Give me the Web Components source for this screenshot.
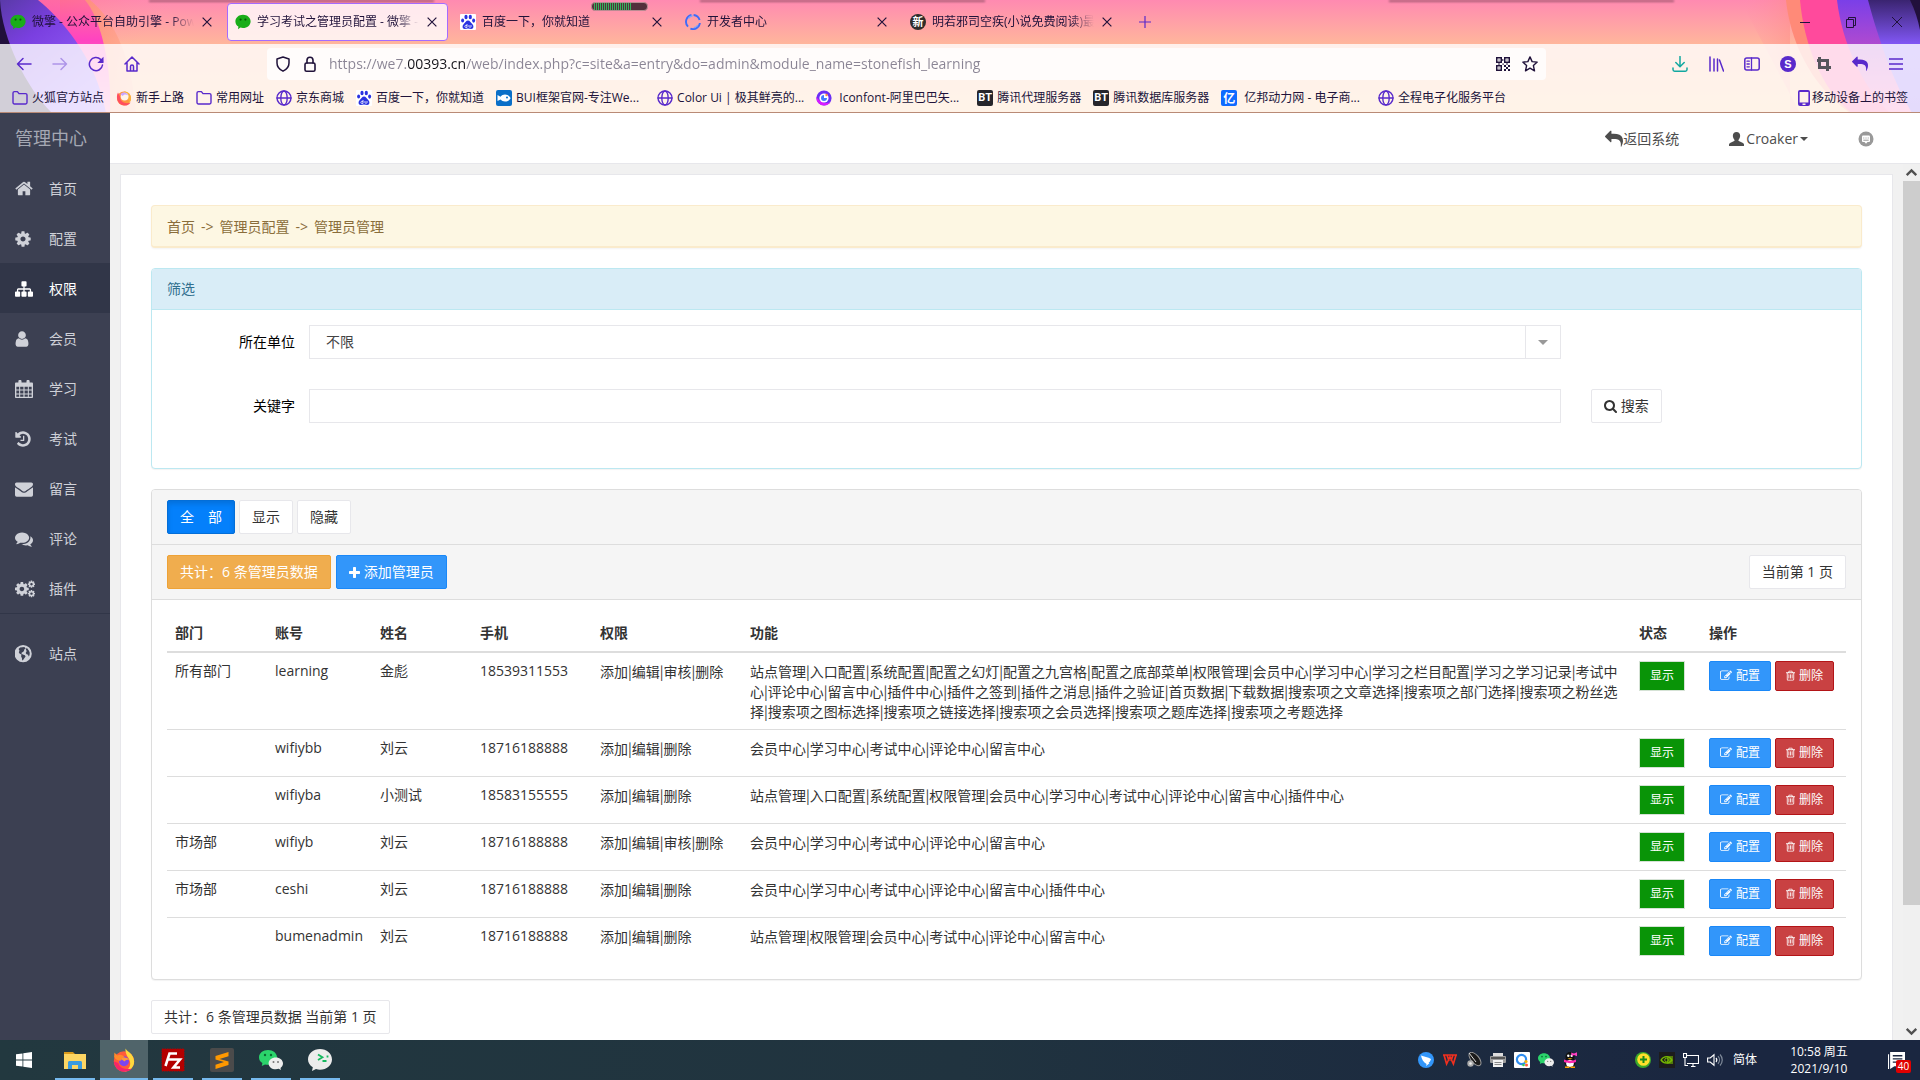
<!DOCTYPE html>
<html lang="zh-CN">
<head>
<meta charset="utf-8">
<title>学习考试之管理员配置 - 微擎</title>
<style>
html, body { margin: 0; height: 100%; }
body {
  font: 14px/20px "Open Sans", "Noto Sans CJK SC", sans-serif;
  color: #333; background: #f1f1f1; overflow: hidden;
}
</style>
</head>
<body>
<desk-top>
  <browser-chrome slot="chrome">
    <browser-tab slot="tab" icon="wechat">微擎 - 公众平台自助引擎 - Powered by</browser-tab>
    <browser-tab slot="tab" icon="wechat" active>学习考试之管理员配置 - 微擎 - 公众平台</browser-tab>
    <browser-tab slot="tab" icon="baidu">百度一下，你就知道</browser-tab>
    <browser-tab slot="tab" icon="ring">开发者中心</browser-tab>
    <browser-tab slot="tab" icon="novel">明若邪司空疾(小说免费阅读)最新章节</browser-tab>
    <book-mark slot="mark" icon="folder">火狐官方站点</book-mark>
    <book-mark slot="mark" icon="firefox">新手上路</book-mark>
    <book-mark slot="mark" icon="folder">常用网址</book-mark>
    <book-mark slot="mark" icon="globeline">京东商城</book-mark>
    <book-mark slot="mark" icon="baidu">百度一下，你就知道</book-mark>
    <book-mark slot="mark" icon="bui" wide>BUI框架官网-专注We...</book-mark>
    <book-mark slot="mark" icon="globeline">Color Ui | 极其鲜亮的...</book-mark>
    <book-mark slot="mark" icon="iconfont" wide>&nbsp;Iconfont-阿里巴巴矢...</book-mark>
    <book-mark slot="mark" icon="bt">腾讯代理服务器</book-mark>
    <book-mark slot="mark" icon="bt">腾讯数据库服务器</book-mark>
    <book-mark slot="mark" icon="yi" wide>&nbsp;亿邦动力网 - 电子商...</book-mark>
    <book-mark slot="mark" icon="globeline">全程电子化服务平台</book-mark>
    <book-mark slot="mobile" icon="phone">移动设备上的书签</book-mark>
  </browser-chrome>

  <side-nav slot="nav" heading="管理中心">
    <nav-item icon="home">首页</nav-item>
    <nav-item icon="cog">配置</nav-item>
    <nav-item icon="sitemap" active>权限</nav-item>
    <nav-item icon="user">会员</nav-item>
    <nav-item icon="calendar">学习</nav-item>
    <nav-item icon="history">考试</nav-item>
    <nav-item icon="envelope">留言</nav-item>
    <nav-item icon="comments">评论</nav-item>
    <nav-item icon="cogs">插件</nav-item>
    <nav-item slot="extra" icon="globe">站点</nav-item>
  </side-nav>

  <top-bar slot="top"></top-bar>

  <crumb-alert>首页<crumb-sep></crumb-sep>管理员配置<crumb-sep></crumb-sep>管理员管理</crumb-alert>
  <filter-panel></filter-panel>
  <data-panel>
    <ui-button slot="filters" kind="active">全　部</ui-button>
    <ui-button slot="filters">显示</ui-button>
    <ui-button slot="filters">隐藏</ui-button>
    <ui-button slot="actions" kind="warning">共计：6 条管理员数据</ui-button>
    <ui-button slot="actions" kind="primary" icon="plus">添加管理员</ui-button>
    <ui-button slot="page">当前第 1 页</ui-button>
    <admin-table></admin-table>
  </data-panel>
  <div><ui-button>共计：6 条管理员数据 当前第 1 页</ui-button></div>

  <task-bar slot="taskbar"></task-bar>
</desk-top>

<script>
const REPLY = '<path transform="translate(1792 0) scale(-1 1)" d="M1792 640q0 26-19 45l-512 512q-19 19-45 19t-45-19-19-45v-256h-224q-98 0-175.500 6t-154 21.500-133 42.500-105.500 69.500-80 101-48.500 138.500-17.500 181q0 55 5 123 0 6 2.500 23.500t2.500 26.500q0 15-8.500 25t-23.500 10q-16 0-28-17-7-9-13-22t-13.500-30-10.500-24q-127-285-127-451 0-199 53-333 162-403 875-403h224v-256q0-26 19-45t45-19 45 19l512 512q19 19 19 45z"/>';
const COG = 'M1152 896q0-106-75-181t-181-75-181 75-75 181 75 181 181 75 181-75 75-181zm512-109v222q0 12-8 23t-20 13l-185 28q-19 54-39 91 35 50 107 138 10 12 10 25t-9 23q-27 37-99 108t-94 71q-12 0-26-9l-138-108q-44 23-91 38-16 136-29 186-7 28-36 28h-222q-14 0-24.500-8.500t-11.500-21.500l-28-184q-49-16-90-37l-141 107q-10 9-25 9-14 0-25-11-126-114-165-168-7-10-7-23 0-12 8-23 15-21 51-66.500t54-70.500q-27-50-41-99l-183-27q-13-2-21-12.500t-8-23.500v-222q0-12 8-23t19-13l186-28q14-46 39-92-40-57-107-138-10-12-10-24 0-10 9-23 26-36 98.500-107.500t94.500-71.500q13 0 26 10l138 107q44-23 91-38 16-136 29-186 7-28 36-28h222q14 0 24.500 8.500t11.500 21.500l28 184q49 16 90 37l142-107q9-9 24-9 13 0 25 10 129 119 165 170 7 8 7 22 0 12-8 23-15 21-51 66.500t-54 70.500q26 50 41 98l183 28q13 2 21 12.500t8 23.500z';
const FOX = '<circle cx="8" cy="9" r="6.800" fill="#ff5a3a"/><path d="M9 .3c1 1.700 2.600 2.200 4 4 1.600 2 2 4.200 1.600 6.400-.8 3-3.600 5.100-6.600 5.100 3-1 4.600-3.600 4-6.600C11.600 6.600 8.600 4.600 9 .3z" fill="#ffd83d"/><path d="M1.300 9c.4 4 3.200 6.800 6.700 6.800 2.200 0 4-.8 5.200-2.200-3 1-8 .4-9-3.600z" fill="#f5246b"/><circle cx="8" cy="8.800" r="3.300" fill="#7b45f0"/><path d="M1.600 3l2 2c1.600-1 3.600-.4 5 1.200C7.600 6.400 6.400 7 6 8.400 4.400 8.600 2.400 8 1.400 6z" fill="#ff8a2a"/><path d="M6 7.400C7 6 10 5.800 11.600 8 10 7.500 9 8 8.400 9z" fill="#ff9a3a"/>';
const M = 'viewBox="0 0 1792 1792"', S = 'viewBox="0 0 16 16"';
const line = (w = 1.4) => `fill="none" stroke="currentColor" stroke-width="${w}" stroke-linecap="round" stroke-linejoin="round"`;
const ICONS = {
  home: ['viewBox="50 100 1692 1692"', '<path d="M1472 992v480q0 26-19 45t-45 19h-384v-384h-256v384h-384q-26 0-45-19t-19-45v-480q0-1 .5-3t.5-3l575-474 575 474q1 2 1 6zm223-69l-62 74q-8 9-21 11h-3q-13 0-21-7l-692-577-692 577q-12 8-24 7-13-2-21-11l-62-74q-8-10-7-23.500t11-21.500l719-599q32-26 76-26t76 26l244 204v-195q0-14 9-23t23-9h192q14 0 23 9t9 23v408l219 182q10 8 11 21.500t-7 23.500z"/>'],
  cog: [M, `<path d="${COG}"/>`],
  cogs: ['viewBox="0 0 1920 1792"', `<path transform="translate(-110 120) scale(.86)" d="${COG}"/><path transform="translate(1170 20) scale(.46)" d="${COG}"/><path transform="translate(1170 930) scale(.46)" d="${COG}"/>`],
  sitemap: [M, '<path d="M1792 1248v320q0 40-28 68t-68 28h-320q-40 0-68-28t-28-68v-320q0-40 28-68t68-28h96v-192h-512v192h96q40 0 68 28t28 68v320q0 40-28 68t-68 28h-320q-40 0-68-28t-28-68v-320q0-40 28-68t68-28h96v-192h-512v192h96q40 0 68 28t28 68v320q0 40-28 68t-68 28h-320q-40 0-68-28t-28-68v-320q0-40 28-68t68-28h96v-192q0-52 38-90t90-38h512v-192h-96q-40 0-68-28t-28-68v-320q0-40 28-68t68-28h320q40 0 68 28t28 68v320q0 40-28 68t-68 28h-96v192h512q52 0 90 38t38 90v192h96q40 0 68 28t28 68z"/>'],
  user: [M, '<path d="M1536 1399q0 109-62.500 187t-150.500 78h-854q-88 0-150.500-78t-62.500-187q0-85 8.500-160.500t31.500-152 58.500-131 94-89 134.500-34.500q131 128 313 128t313-128q76 0 134.500 34.500t94 89 58.500 131 31.500 152 8.500 160.500zm-256-887q0 159-112.500 271.500t-271.500 112.500-271.500-112.500-112.500-271.500 112.500-271.500 271.500-112.500 271.500 112.500 112.500 271.500z"/>'],
  calendar: [S, '<path fill-rule="evenodd" d="M1 2.200h2V1c0-.6.4-1 1-1h.8c.6 0 1 .4 1 1v1.200h4.400V1c0-.6.4-1 1-1h.8c.6 0 1 .4 1 1v1.200h2c.6 0 1 .4 1 1V15c0 .6-.4 1-1 1H1c-.6 0-1-.4-1-1V3.200c0-.6.4-1 1-1zM1.200 6v2.500h2.500V6zm3.400 0v2.500h2.900V6zm3.900 0v2.500h2.900V6zm3.800 0v2.500h2.500V6zM1.200 9.300V12h2.500V9.300zm3.400 0V12h2.900V9.300zm3.900 0V12h2.900V9.300zm3.800 0V12h2.500V9.300zM1.200 12.800v2.100h2.500v-2.100zm3.400 0v2.100h2.900v-2.100zm3.900 0v2.100h2.900v-2.100zm3.800 0v2.100h2.500v-2.100z"/>'],
  history: [M, '<path d="M1664 896q0 156-61 298t-164 245-245 164-298 61q-172 0-327-72.500t-264-204.500q-7-10-6.500-22.500t8.500-20.500l137-138q10-9 25-9 16 2 23 12 73 95 179 147t225 52q104 0 198.500-40.500t163.500-109.500 109.500-163.500 40.500-198.500-40.500-198.500-109.500-163.500-163.500-109.500-198.500-40.500q-98 0-188 35.500t-160 101.500l137 138q31 30 14 69-17 40-59 40h-448q-26 0-45-19t-19-45v-448q0-42 40-59 39-17 69 14l130 129q107-101 244.500-156.500t284.500-55.500q156 0 298 61t245 164 164 245 61 298zm-640-288v448q0 14-9 23t-23 9h-320q-14 0-23-9t-9-23v-64q0-14 9-23t23-9h224v-352q0-14 9-23t23-9h64q14 0 23 9t9 23z"/>'],
  envelope: [M, '<path d="M1792 710v794q0 66-47 113t-113 47h-1472q-66 0-113-47t-47-113v-794q44 49 101 87 362 246 497 345 57 42 92.500 65.500t94.500 48 110 24.500h2q51 0 110-24.500t94.500-48 92.500-65.500q170-123 498-345 57-39 100-87zm0-294q0 79-49 151t-122 123q-376 261-468 325-10 7-42.500 30.500t-54 38-52 32.500-57.500 27-50 9h-2q-23 0-50-9t-57.500-27-52-32.500-54-38-42.500-30.500q-91-64-262-182.500t-205-142.500q-62-42-117-115.500t-55-136.500q0-78 41.500-130t118.500-52h1472q65 0 112.500 47t47.500 113z"/>'],
  comments: [M, '<path d="M1408 768q0 139-94 257t-256.500 186.500-353.500 68.500q-86 0-176-16-124 88-278 128-36 9-86 16h-3q-11 0-20.500-8t-11.500-21q-1-3-1-6.500t.5-6.500 2-6l2.500-5 3.500-5.500 4-5 4.500-5 4-4.500q5-6 23-25t26-29.500 22.500-29 25-38.500 20.500-44q-124-72-195-177t-71-224q0-139 94-257t256.500-186.500 353.500-68.500 353.500 68.500 256.500 186.500 94 257zm384 256q0 120-71 224.500t-195 176.500q10 24 20.500 44t25 38.500 22.500 29 26 29.500 23 25q1 1 4 4.500t4.500 5 4 5 3.500 5.500l2.500 5 2 6 .5 6.500-1 6.500q-3 14-13 22t-22 7q-50-7-86-16-154-40-278-128-90 16-176 16-271 0-472-132 58 4 88 4 161 0 309-45t264-129q125-92 192-212t67-254q0-77-23-152 129 71 204 178t75 230z"/>'],
  globe: [S, '<path fill-rule="evenodd" d="M7.200 0a7.600 7.600 0 1 1 0 15.400A7.600 7.600 0 0 1 7.200 0zM4.500 2.200L3.200 3.600 4 5l-.6 1.500.8 1.200 1.600.8-.4 1.600.8 1.700.2 1.900.8-.3 1.200-1.800 1-1.400-.6-1.200-1.800-.6-1.200-.6.2-1.200 1.200-.4.800-1 .2-1.300L9.500 3 8.300 1.800 6.500 2zM10.500 2.500L9.600 4l.8 1.400L9.500 7l.8 1.300 1.400.4.4 1.600.8-1.200.2-2.300L12.400 5z"/>'],
  search: ['viewBox="64 128 1664 1664"', '<path d="M1216 832q0-185-131.500-316.500t-316.500-131.500-316.500 131.500-131.500 316.500 131.500 316.500 316.500 131.500 316.500-131.500 131.500-316.500zm512 832q0 52-38 90t-90 38q-54 0-90-38l-343-342q-179 124-399 124-143 0-273.500-55.500t-225-150-150-225-55.500-273.500 55.500-273.500 150-225 225-150 273.500-55.500 273.500 55.500 225 150 150 225 55.500 273.500q0 220-124 399l343 343q37 37 37 90z"/>'],
  plus: ['viewBox="192 128 1408 1408"', '<path d="M1600 736v192q0 40-28 68t-68 28h-416v416q0 40-28 68t-68 28h-192q-40 0-68-28t-28-68v-416h-416q-40 0-68-28t-28-68v-192q0-40 28-68t68-28h416v-416q0-40 28-68t68-28h192q40 0 68 28t28 68v416h416q40 0 68 28t28 68z"/>'],
  edit: ['viewBox="0 64 1792 1792"', '<path d="M888 1184l116-116-152-152-116 116v56h96v96h56zm440-720q-16-16-33 1l-350 350q-17 17-1 33t33-1l350-350q17-17 1-33zm80 594v190q0 119-84.500 203.500t-203.500 84.500h-832q-119 0-203.500-84.500t-84.500-203.500v-832q0-119 84.500-203.500t203.500-84.500h832q63 0 117 25 15 7 18 23 3 17-9 29l-49 49q-14 14-32 8-23-6-45-6h-832q-66 0-113 47t-47 113v832q0 66 47 113t113 47h832q66 0 113-47t47-113v-126q0-13 9-22l64-64q15-15 35-7t20 29zm-96-738l288 288-672 672h-288v-288zm444 132l-92 92-288-288 92-92q28-28 68-28t68 28l152 152q28 28 28 68t-28 68z"/>'],
  trash: ['viewBox="192 64 1408 1792"', '<path d="M704 736v576q0 14-9 23t-23 9h-64q-14 0-23-9t-9-23v-576q0-14 9-23t23-9h64q14 0 23 9t9 23zm256 0v576q0 14-9 23t-23 9h-64q-14 0-23-9t-9-23v-576q0-14 9-23t23-9h64q14 0 23 9t9 23zm256 0v576q0 14-9 23t-23 9h-64q-14 0-23-9t-9-23v-576q0-14 9-23t23-9h64q14 0 23 9t9 23zm128 724v-948h-896v948q0 22 7 40.500t14.500 27 10.500 8.500h832q3 0 10.500-8.500t14.500-27 7-40.500zm-672-1076h448l-48-117q-7-9-17-11h-317q-10 2-17 11zm928 32v64q0 14-9 23t-23 9h-96v948q0 83-47 143.500t-113 60.500h-832q-66 0-113-58.500t-47-141.500v-952h-96q-14 0-23-9t-9-23v-64q0-14 9-23t23-9h309l70-167q15-37 54-63t79-26h320q40 0 79 26t54 63l70 167h309q14 0 23 9t9 23z"/>'],
  reply: [M, REPLY],
  person: [S, '<path d="M8 0c2.400 0 3.900 1.600 3.900 4.100 0 1.500-.6 3.100-1.600 4.100-.3.400-.3 1.300.2 1.500l4.400 1.900c.7.300 1.100 1 1.100 1.700V15H0v-1.700c0-.7.400-1.400 1.100-1.700l4.400-1.900c.5-.2.500-1.100.2-1.500-1-1-1.600-2.600-1.600-4.100C4.100 1.600 5.600 0 8 0z"/>'],
  chatdot: [S, '<circle cx="8" cy="8" r="7.500"/><rect x="4" y="4.500" width="8" height="6.500" rx="1" fill="#fff"/><path d="M6.500 11h3L8 12.800z" fill="#fff"/><path d="M5.300 7h1M7.500 7h1M9.700 7h1M5.300 9.200h5.400" stroke="#999" stroke-width="1"/>'],
  wechat: [S, '<path fill="#1aad19" d="M8 .8c4.200 0 7.600 2.900 7.600 6.600S12.200 14 8 14c-.9 0-1.800-.1-2.600-.4L3 15.200l.4-2.600C1.600 11.400.4 9.500.4 7.400.4 3.700 3.800.8 8 .8z"/><circle cx="5.600" cy="5.600" r="1.100" fill="#0a5a09"/><circle cx="10.400" cy="5.600" r="1.100" fill="#0a5a09"/>'],
  baidu: [S, '<rect width="16" height="16" rx="1" fill="#fff"/><g fill="#2932e1"><ellipse cx="6" cy="3" rx="1.600" ry="2.300"/><ellipse cx="10.300" cy="3" rx="1.600" ry="2.300"/><ellipse cx="2.600" cy="6.500" rx="1.500" ry="2.100"/><ellipse cx="13.600" cy="6.600" rx="1.500" ry="2.100"/><path d="M8 6.500c2 0 2.600 2 4.200 3.500 2 1.900 1.400 5-1 5-1.200 0-2-.4-3.200-.4s-2 .4-3.200.4c-2.400 0-3-3.100-1-5C5.400 8.500 6 6.500 8 6.500z"/></g><path d="M7 10v3.400H5.600c-1 0-1-2 0-2H7M9 11v1.800c0 .6 2 .6 2 0V11" fill="none" stroke="#fff" stroke-width=".8"/>'],
  ring: [S, '<g fill="none" stroke="#3d6bfa" stroke-width="1.900"><path d="M6.500.9A7 7 0 0 0 3 12.600"/><path d="M5.400 14.600A7 7 0 0 0 14.900 9"/><path d="M14.600 6A7 7 0 0 0 8.600 1"/></g><path d="M3.500 4.500a6 6 0 0 1 4-2.800M12.800 11a6 6 0 0 1-4 2.800" stroke="#7aa4ff" stroke-width="1.400" fill="none"/>'],
  folder: [S, `<path ${line()} d="M1 3c0-.8.600-1.400 1.400-1.400h3L7 3.600h6.600c.8 0 1.400.6 1.400 1.400v7.600c0 .8-.6 1.400-1.400 1.400H2.400C1.600 14 1 13.400 1 12.600z"/>`],
  globeline: [S, `<g ${line()}><circle cx="8" cy="8" r="7"/><ellipse cx="8" cy="8" rx="3.200" ry="7"/><path d="M1 8h14"/></g>`],
  firefox: [S, '<circle cx="8" cy="8.500" r="7" fill="#ff9640"/><path d="M2 2.500C0 6 .6 12 5 14.600c4 2 8 .6 9.600-2.200C10 14.600 4 12 4.200 7z" fill="#ff4f5e"/><path d="M8 1.600c4 0 7 2.600 7 6.600 0 2-.8 3.600-2 4.800 0-4-2-6-5-6.400z" fill="#f7b23c"/><circle cx="8.600" cy="6.600" r="3.900" fill="#fff3e8"/><path d="M4.400 4.400C6.500 1.500 11 2 12.400 5.500 10 4 8 4 6.800 6z" fill="#c9a6ff"/>'],
  bui: [S, '<rect width="16" height="16" rx="2" fill="#0a6fc8"/><path d="M1.500 5l3 1.800C6.200 4.400 9 3.800 11.600 5c1.600.8 2.600 2 3 3.200-1 2-3 3.400-5.600 3.400-1.800 0-3.400-.8-4.500-2L1.500 11z" fill="#fff"/><circle cx="11" cy="7.400" r="1" fill="#0a6fc8"/>'],
  iconfont: [S, '<circle cx="8" cy="8" r="7.600" fill="#6a2ff5"/><path d="M8 15.600A7.600 7.600 0 0 1 .6 6.500C2 11 10 15 14.600 11.800A7.600 7.600 0 0 1 8 15.600z" fill="#d81bff"/><circle cx="8" cy="8" r="4.600" fill="#fff"/><path d="M8 5a3 3 0 1 0 3 3H8z" fill="#3f7bff"/><circle cx="10.500" cy="5" r="1.200" fill="#ff8a3c"/>'],
  phone: ['viewBox="2 0 12 16"', '<path fill-rule="evenodd" d="M4 0h8a2 2 0 0 1 2 2v12a2 2 0 0 1-2 2H4a2 2 0 0 1-2-2V2a2 2 0 0 1 2-2zm-.4 2v10.600h8.800V2zM6.500 13.600V15h3v-1.400z"/>'],
  back: [S, `<path ${line(1.500)} d="M15 8H1.500M7 2.500L1.500 8 7 13.500"/>`],
  forward: [S, `<path ${line(1.500)} d="M1 8h13.500M9 2.500L14.500 8 9 13.500"/>`],
  reload: [S, `<path ${line(1.500)} d="M14.500 9A6.600 6.600 0 1 1 12.600 3.400L14.500 5.200"/><path d="M15.500.800v6.200H9.300z"/>`],
  house: [S, `<path ${line(1.500)} d="M1 8L8 1l7 7M3 6.500V15h10V6.500M6.500 15v-4.500c0-2 3-2 3 0V15"/>`],
  shield: [S, `<path ${line(1.500)} d="M8 1l6 2v4c0 4-2.500 6.500-6 8.200C4.500 13.500 2 11 2 7V3z"/>`],
  lock: [S, `<rect ${line(1.600)} x="3" y="7" width="10" height="8.200" rx="1.500"/><path ${line(1.600)} d="M5 7V4.200C5 .2 11 .2 11 4.200V7"/>`],
  qr: [S, '<path fill-rule="evenodd" d="M1 1h6v6H1zm1.500 1.500v3h3v-3zM9 1h6v6H9zm1.500 1.500v3h3v-3zM1 9h6v6H1zm1.500 1.500v3h3v-3zM9 9h2v2H9zm4 0h2v2h-2zm-2 2h2v2h-2zm-2 2h2v2H9zm4 0h2v2h-2z"/><path d="M3.500 3.500h1v1h-1zM11.500 3.500h1v1h-1zM3.500 11.500h1v1h-1zM7.300 3h1v2h-1zM3 7.400h2v1H3zM7.400 7.400h1.400v1.400H7.400zM11 7.400h2v1h-2z"/>'],
  star: [S, `<path ${line()} d="M8 .9l2.100 4.700 5.100.5-3.800 3.500 1.100 5.200L8 12.200l-4.500 2.600 1.100-5.200L.8 6.100l5.100-.5z"/>`],
  download: [S, `<path ${line(1.500)} d="M8 .5v10M3.800 6.500L8 10.700l4.200-4.200M1 12v1.500c0 1 .6 1.700 1.600 1.700h10.800c1 0 1.600-.7 1.600-1.700V12"/>`],
  library: [S, `<path ${line(1.500)} d="M2 1v14M6 3v12M9.500 3v12M11.500 4l4 11"/>`],
  sidebar: [S, `<rect ${line(1.500)} x=".8" y="2" width="14.400" height="12" rx="2"/><path ${line(1.300)} d="M7.500 2v12M3 5.200h2.300M3 8h2.300M3 10.800h2.300"/>`],
  crop: [S, '<path d="M3.500 1v10.500H15M1 4.500h10.500V15" fill="none" stroke="#55565c" stroke-width="3"/>'],
  menu: [S, '<path d="M1 3h14M1 8h14M1 13h14" stroke="currentColor" stroke-width="1.300"/>'],
  plusthin: [S, '<path d="M8 2v12M2 8h12" stroke="currentColor" stroke-width="1.200"/>'],
  close: [S, '<path d="M3 3l10 10M13 3L3 13" stroke="currentColor" stroke-width="1.400"/>'],
  min: [S, '<path d="M3 8.500h10" stroke="currentColor" stroke-width="1"/>'],
  restore: [S, '<path d="M3.500 5.500h7v8h-7zM5.500 5.500v-2h7v8h-2" fill="none" stroke="currentColor"/>'],
  winclose: [S, '<path d="M3 3l10 10M13 3L3 13" stroke="currentColor" stroke-width="1"/>'],
  up: [S, '<path d="M3.500 10.500L8 6l4.500 4.500" fill="none" stroke="#505050" stroke-width="2.200"/>'],
  down: [S, '<path d="M3.500 5.500L8 10l4.500-4.500" fill="none" stroke="#505050" stroke-width="2.200"/>'],
  windows: [S, '<path fill="#fff" d="M0 2.300l6.500-.9v6.200H0zM7.300 1.300L16 0v7.600H7.300zM0 8.400h6.500v6.200L0 13.700zM7.300 8.400H16V16l-8.700-1.300z"/>'],
  explorer: ['viewBox="0 0 24 24"', '<path d="M1 4h9l2 2h11v3H1z" fill="#d99a1c"/><rect x="1" y="6" width="22" height="15" fill="#fdd663"/><path d="M5 21v-6.500c0-.8.700-1.500 1.500-1.500h11c.8 0 1.500.7 1.500 1.500V21h-4v-4H9v4z" fill="#3a9be0"/>'],
  foxbig: [S, FOX],
  filezilla: ['viewBox="0 0 24 24"', '<rect x="1" y="1" width="22" height="22" fill="#b30000" stroke="#b30000" stroke-width="1" stroke-dasharray="1.500 1"/><path d="M4.500 18L8.500 5.500H16M6.500 11.500h5.500M12 11.500h7l-6.500 8H19" fill="none" stroke="#fff" stroke-width="2.600"/>'],
  sublime: ['viewBox="0 0 24 24"', '<rect width="24" height="24" rx="2" fill="#4b4b4b"/><path d="M18.500 4v4.200L9.500 11l9 2.600V17l-13 4v-4.200L14 14l-8.500-2.600V8z" fill="#ff9800"/>'],
  wechat2: ['viewBox="0 0 24 24"', '<path d="M9 2c5 0 9 3.200 9 7.400s-4 7.400-9 7.400c-1 0-2-.1-3-.4L2.800 18l.6-3C1.300 13.700 0 11.700 0 9.400 0 5.200 4 2 9 2z" fill="#2bd46b"/><circle cx="6" cy="7" r="1.200" fill="#0b6b33"/><circle cx="12" cy="7" r="1.200" fill="#0b6b33"/><path d="M16.800 9.500c4 0 7.200 2.600 7.200 6 0 1.800-1 3.400-2.500 4.500l.4 2-2.200-1.200c-.9.300-1.900.5-2.900.5-4 0-7.200-2.600-7.200-5.900s3.200-5.900 7.200-5.900z" fill="#eee"/><circle cx="14.500" cy="14" r="1" fill="#777"/><circle cx="19" cy="14" r="1" fill="#777"/>'],
  devtool: ['viewBox="0 0 24 24"', '<path d="M12 1c6.600 0 12 4.600 12 10.400s-5.400 10.300-12 10.300c-1.400 0-2.700-.2-4-.6L4 23l.8-3.800C1.800 17.300 0 14.500 0 11.400 0 5.600 5.400 1 12 1z" fill="#ececec"/><path d="M10 6.500l4.500 2.800-4.500 2.800M14.500 13h4M19.500 7.500v2" fill="none" stroke="#17b85f" stroke-width="1.800"/>'],
  bird: [S, '<circle cx="8" cy="8" r="8" fill="#3296fa"/><path d="M3 3.500c3 1.200 7 1.600 10 3.500-.5 2-1.500 3-2.500 4l1 .2L8 14l.6-2C5.500 10.500 3.500 7 3 3.500z" fill="#fff"/>'],
  wps: [S, '<path d="M1 3h14M2 3l2.600 9L8 5l3.400 7L14 3M5 3l2 6M11 3L9 9" fill="none" stroke="#f0301f" stroke-width="1.700"/>'],
  dish: [S, '<ellipse cx="9" cy="7" rx="8" ry="4" transform="rotate(50 9 7)" fill="#1b1b1b" stroke="#999"/><circle cx="4.500" cy="11.500" r="3.200" fill="#aaa"/><circle cx="4.500" cy="11.500" r="1.300" fill="#eee"/><path d="M3 1l7 9" stroke="#ddd"/>'],
  printer: [S, '<rect x="3" y="1" width="10" height="5" fill="#ddd"/><rect x="0" y="4" width="16" height="7" rx="1" fill="#9c9c9c"/><rect x="1" y="5" width="14" height="2" fill="#555"/><rect x="3" y="8" width="10" height="7" fill="#f2f2f2"/><path d="M4.500 10.500h7M4.500 12.500h7" stroke="#888"/>'],
  qtool: [S, '<rect width="16" height="16" rx="1" fill="#fff"/><circle cx="7.500" cy="7.500" r="4.600" fill="none" stroke="#2f8df0" stroke-width="2.200"/><circle cx="12" cy="9.500" r="1.600" fill="#ffb400"/><circle cx="12.500" cy="13" r="1.500" fill="#ff5a3c"/><circle cx="9.500" cy="13" r="1.300" fill="#34c759"/>'],
  penguin: [S, '<ellipse cx="8" cy="4.800" rx="4.600" ry="4.800" fill="#111"/><ellipse cx="8" cy="10.500" rx="5.500" ry="5" fill="#111"/><ellipse cx="8" cy="11.500" rx="3.800" ry="3.600" fill="#fff"/><circle cx="6.300" cy="3.800" r="1.200" fill="#fff"/><circle cx="9.700" cy="3.800" r="1.200" fill="#fff"/><path d="M5.500 6.200h5L8 7.600z" fill="#ffb400"/><path d="M2 7.600c3.500 1.600 8.500 1.600 12 0v2.400c-3.500 1.600-8.500 1.600-12 0z" fill="#ff2ab0"/><path d="M9 .5l3 1L15 .3v4l-3-1.300-2 1.300z" fill="#ff3dc0"/><path d="M3 15.200h4.500M8.500 15.200H13" stroke="#ffa200" stroke-width="1.500"/>'],
  safe: [S, '<circle cx="8" cy="8" r="8" fill="#3ca82a"/><circle cx="8.500" cy="7.500" r="6.300" fill="#ffdf2b"/><path d="M8.500 4v7M5 7.500h7" stroke="#178a1a" stroke-width="2"/>'],
  nvidia: [S, '<rect width="16" height="16" fill="#1c1c1c"/><path d="M2 8c3-4.500 8-4.500 11 0-3 4-8 4-11 0z" fill="none" stroke="#76b900" stroke-width="1.300"/><circle cx="7.500" cy="8" r="1.800" fill="none" stroke="#76b900"/><path d="M8 4h6v8H8z" fill="#76b900" opacity=".6"/>'],
  network: [S, '<path d="M4 3.500h11.500v8H4M8 14.500h4.500M10 11.500v3M.5 1.500h3v4h-3zM2 5.500v8h3" fill="none" stroke="#fff" stroke-width="1.100"/>'],
  volume: [S, '<path d="M.6 6v4h2.600L7 13.200V2.800L3.200 6z" fill="none" stroke="#fff" stroke-width="1.100"/><path d="M9 6c1 1.200 1 2.800 0 4" fill="none" stroke="#fff" stroke-width="1.200"/><path d="M11 4.200c2 2.200 2 5.400 0 7.600M13 2.500c3 3.200 3 7.800 0 11" fill="none" stroke="#7f8a99" stroke-width="1.200"/>'],
  notes: [S, '<path d="M2 0h14v13.500H6L2 16z" fill="#fff"/><path d="M.5 2v14" stroke="#fff" stroke-width="1"/><path d="M4.500 3.500h9M4.500 6.500h9M4.500 9.500h6" stroke="#1a2640" stroke-width="1.300"/>']
};
const TILES = { bt: 'BT', yi: '亿', novel: '新', sbadge: 'S' };

const define = (name, html, setup) => {
  const tpl = document.createElement('template');
  tpl.innerHTML = html;
  customElements.define(name, class extends HTMLElement {
    connectedCallback() {
      if (this.shadowRoot) return;
      const root = this.attachShadow({ mode: 'open' });
      root.append(tpl.content.cloneNode(true));
      if (setup) setup(root, this);
    }
  });
};

define('ui-icon', `<style>
:host { display: inline-flex; flex: none; width: var(--size, 16px); height: var(--size, 16px); }
:host([name=trash]) { width: 9px; }
:host([name=plus]) { width: 11px; height: 11px; }
svg { width: 100%; height: 100%; fill: currentColor; display: block; }
.tile { display: block; width: 16px; height: 16px; border-radius: 2px; color: #fff; text-align: center; }
.bt { background: #26262b; font: bold 11px/16px "Roboto", sans-serif; }
.yi { background: #0f6bff; font: bold 12px/16px "Noto Sans CJK SC", sans-serif; }
.novel { border-radius: 50%; background: #2f2c2a; font: bold 11px/15px "Noto Sans CJK SC", sans-serif; }
.sbadge { border-radius: 50%; background: #592acb; font: bold 11px/16px "Liberation Sans", sans-serif; }
</style>`, (root, el) => {
  const n = el.getAttribute('name');
  root.append(document.createRange().createContextualFragment(
    TILES[n] ? `<span class="tile ${n}">${TILES[n]}</span>` : `<svg ${ICONS[n][0]} aria-hidden="true">${ICONS[n][1]}</svg>`));
});

define('ui-button', `<style>
:host { display: inline-flex; --bg: #fff; --line: #e7e7eb; --fg: #333; }
:host([kind=active]) { --bg: #0480fb; --line: #036ed8; --fg: #fff; --inset: inset 0 3px 5px rgba(0,0,0,.125); }
:host([kind=primary]) { --bg: #3296fa; --line: #1a88f8; --fg: #fff; }
:host([kind=warning]) { --bg: #f0ad4e; --line: #eea236; --fg: #fff; }
:host([kind=danger]) { --bg: #c94142; --line: #b31417; --fg: #fff; }
:host([kind=success]) { --bg: #099407; --line: #d5e2d5; --fg: #fff; }
button { display: flex; align-items: center; gap: 4px; box-sizing: border-box; height: 34px; margin: 0; padding: 0 12px; border: 1px solid var(--line); border-radius: 2px; background: var(--bg); color: var(--fg); box-shadow: var(--inset, none); font: inherit; line-height: 20px; white-space: nowrap; cursor: pointer; }
:host([small]) button { height: 30px; padding: 0 10px; font-size: 12px; }
:host([kind=success]) button { border-radius: 0; }
ui-icon { --size: 13px; }
:host([small]) ui-icon { --size: 12px; }
</style><button type="button"><slot></slot></button>`, (root, el) => {
  const n = el.getAttribute('icon');
  if (n) root.querySelector('button').insertAdjacentHTML('afterbegin', `<ui-icon name="${n}"></ui-icon>`);
});

define('desk-top', `<style>
:host { display: flex; flex-direction: column; height: 100vh; }
.page { flex: 1; min-height: 0; display: flex; }
.right { flex: 1; min-width: 0; display: flex; flex-direction: column; }
.scroll { flex: 1; min-height: 0; display: flex; }
main { flex: 1; min-width: 0; display: flex; flex-direction: column; gap: 20px; margin: 10px 10px 0; padding: 30px; border: 1px solid #e7e7eb; border-bottom: 0; background: #fff; overflow: hidden; box-sizing: border-box; }
.bar { width: 17px; background: #f0f0f0; display: flex; flex-direction: column; align-items: center; }
.thumb { width: 17px; flex: 1; background: #cdcdcd; }
.track { flex: 0 0 118px; }
.bar ui-icon { --size: 17px; }
</style>
<slot name="chrome"></slot>
<div class="page">
  <slot name="nav"></slot>
  <div class="right">
    <slot name="top"></slot>
    <div class="scroll">
      <main><slot></slot></main>
      <div class="bar"><ui-icon name="up"></ui-icon><div class="thumb"></div><div class="track"></div><ui-icon name="down"></ui-icon></div>
    </div>
  </div>
</div>
<slot name="taskbar"></slot>`);

define('browser-tab', `<style>
:host { display: block; width: 225px; height: 44px; padding: 3px 2px; box-sizing: border-box; color: #20123a; font-size: 12px; line-height: 16px; }
.tab { display: flex; align-items: center; gap: 6px; height: 38px; padding: 0 8px 0 7px; box-sizing: border-box; border: 1px solid transparent; border-radius: 4px; }
:host([active]) .tab { background: rgba(255,255,255,.8); border-color: #a46bff; }
.title { flex: 1; min-width: 0; padding: 0; border: 0; background: none; color: inherit; font: inherit; text-align: left; overflow: hidden; white-space: nowrap; -webkit-mask-image: linear-gradient(to left, transparent, #000 24px); mask-image: linear-gradient(to left, transparent, #000 24px); }
.x { display: flex; padding: 0; border: 0; background: none; color: inherit; }
.x ui-icon { --size: 14px; }
</style><div class="tab"><button class="title" type="button"><slot></slot></button><button class="x" type="button" aria-label="关闭标签页"><ui-icon name="close"></ui-icon></button></div>`, (root, el) =>
  root.querySelector('.tab').insertAdjacentHTML('afterbegin', `<ui-icon name="${el.getAttribute('icon')}"></ui-icon>`));

define('book-mark', `<style>
:host { display: block; }
:host([wide]) { padding-right: 6px; }
a { display: flex; align-items: center; gap: 4px; color: #20123a; font-size: 12px; line-height: 16px; text-decoration: none; white-space: nowrap; }
ui-icon { color: #592acb; }
:host([icon=phone]) a { gap: 0; }
</style><a href="#"><slot></slot></a>`, (root, el) =>
  root.querySelector('a').insertAdjacentHTML('afterbegin', `<ui-icon name="${el.getAttribute('icon')}"></ui-icon>`));

define('browser-chrome', `<style>
:host { display: block; flex: none; position: relative; overflow: hidden; background: linear-gradient(#ff8ab1, #ffb69c 44px, #ffc38c); border-bottom: 1px solid #b98a76; }
.art { position: absolute; top: 0; height: 113px; }
.l { left: 0; } .r { right: 0; }
.tabs, .tools, .marks { position: relative; display: flex; align-items: center; }
.tabs { height: 44px; }
.tabs slot { display: flex; }
.new { display: flex; margin-left: 12px; padding: 0; border: 0; background: none; color: #592acb; }
.win { margin-left: auto; display: flex; color: #20123a; }
.win button { width: 46px; height: 44px; display: flex; align-items: center; justify-content: center; padding: 0; border: 0; background: none; color: inherit; }
.tools { height: 40px; padding: 0 16px; background: rgba(255,255,255,.8); color: #592acb; }
.tools button { display: flex; padding: 0; border: 0; background: none; color: inherit; }
.group { display: flex; gap: 20px; }
.group .dim { opacity: .4; }
.group .down { color: #12a8a0; }
.url { flex: 1; display: flex; align-items: center; height: 32px; margin: 0 126px 0 127px; padding: 0 8px; gap: 11px; border-radius: 4px; background: #fffcfb; color: #20123a; }
.url input { flex: 1; min-width: 0; border: 0; outline: 0; padding: 0; font: 14px/20px "Open Sans", "Noto Sans", sans-serif; color: transparent; background: linear-gradient(90deg, #8a8494 var(--from), #15141a var(--from) var(--to), #8a8494 var(--to)); -webkit-background-clip: text; background-clip: text; }
.marks { height: 28px; padding: 0 12px; background: rgba(255,255,255,.8); }
.marks slot { display: flex; gap: 12px; }
.marks .m { margin-left: auto; }
.meter { position: absolute; left: 591px; top: 2px; width: 55px; height: 7px; border: 1px solid #b98c92; border-radius: 4px; background: repeating-linear-gradient(90deg, #35b35a 0 1px, #54303c 1px 2px) 2px 0 / 38px 7px no-repeat, #54303c; }
.edge { position: absolute; top: 0; width: 285px; height: 2px; background: #a45a72; filter: blur(1px); }
.e1 { left: 149px; } .e2 { left: 700px; } .e3 { left: 1389px; }
</style>
<svg class="art l" width="180" height="113" viewBox="0 0 180 113" aria-hidden="true">
  <defs>
    <linearGradient id="a" x1="0" y1="0" x2="1" y2=".3"><stop offset="0" stop-color="#ff6a5e"/><stop offset="1" stop-color="#ff8fae" stop-opacity="0"/></linearGradient>
    <linearGradient id="b" x1="0" y1="0" x2="0" y2="1"><stop offset="0" stop-color="#ff5fa8" stop-opacity=".7"/><stop offset=".35" stop-color="#ff44c0"/><stop offset="1" stop-color="#ff8ac0"/></linearGradient>
    <linearGradient id="c" x1="0" y1="0" x2=".7" y2="1"><stop offset="0" stop-color="#5a3aa8"/><stop offset=".35" stop-color="#7a3fe0"/><stop offset="1" stop-color="#9a6bff"/></linearGradient>
    <linearGradient id="ln" x1="0" y1="0" x2="1" y2="0"><stop offset="0" stop-color="#ff8a6a"/><stop offset="1" stop-color="#ffa28a" stop-opacity=".5"/></linearGradient>
  </defs>
  <path d="M0 0H170V44H130Z" fill="url(#a)" opacity=".5"/>
  <path d="M90 0C115 20 132 60 136 113H60L60 0Z" fill="url(#ln)"/>
  <path d="M30 0H85C102 20 112 70 110 113H60Z" fill="url(#b)"/>
  <path d="M0 0H38C60 18 95 55 106 113H0Z" fill="url(#c)"/>
  <path d="M0 0C2 40 28 90 52 113H0Z" fill="#21103c"/>
</svg>
<svg class="art r" width="180" height="113" viewBox="0 0 180 113" aria-hidden="true">
  <defs>
    <linearGradient id="d" x1="0" y1="0" x2="1" y2="0"><stop offset="0" stop-color="#ff8fae" stop-opacity="0"/><stop offset="1" stop-color="#ff8a80"/></linearGradient>
    <linearGradient id="e" x1="0" y1="0" x2="0" y2="1"><stop offset="0" stop-color="#7a3fe8"/><stop offset=".4" stop-color="#b04ad0"/><stop offset="1" stop-color="#ff60b0"/></linearGradient>
    <linearGradient id="f" x1="0" y1="0" x2="0" y2="1"><stop offset="0" stop-color="#3a2470"/><stop offset=".4" stop-color="#8358f8"/><stop offset="1" stop-color="#7a4cf0"/></linearGradient>
  </defs>
  <path d="M0 0H50V113H60Z" fill="url(#d)" opacity=".6"/>
  <path d="M46 0C50 40 70 85 110 113H180V0Z" fill="#ff8a78"/>
  <path d="M60 0C64 45 82 90 112 113H180V0Z" fill="#ff4a9c"/>
  <path d="M97 0C102 45 125 90 150 113H180V0Z" fill="url(#e)"/>
  <path d="M128 0C140 45 155 85 172 113H180V0Z" fill="url(#f)"/>
  <path d="M170 0C175 10 178 20 180 30V0Z" fill="#21103c"/>
</svg>
<div class="edge e1"></div><div class="edge e2"></div><div class="edge e3"></div>
<div class="tabs"><slot name="tab"></slot><button class="new" type="button" aria-label="打开新标签页"><ui-icon name="plusthin"></ui-icon></button>
  <div class="win"><button type="button" aria-label="最小化"><ui-icon name="min"></ui-icon></button><button type="button" aria-label="还原"><ui-icon name="restore"></ui-icon></button><button type="button" aria-label="关闭"><ui-icon name="winclose"></ui-icon></button></div>
</div>
<div class="tools">
  <div class="group"><button type="button" aria-label="后退"><ui-icon name="back"></ui-icon></button><button class="dim" type="button" aria-label="前进"><ui-icon name="forward"></ui-icon></button><button type="button" aria-label="刷新"><ui-icon name="reload"></ui-icon></button><button type="button" aria-label="主页"><ui-icon name="house"></ui-icon></button></div>
  <div class="url"><ui-icon name="shield"></ui-icon><ui-icon name="lock"></ui-icon><input aria-label="地址" value="https://we7.00393.cn/web/index.php?c=site&amp;a=entry&amp;do=admin&amp;module_name=stonefish_learning"><ui-icon name="qr"></ui-icon><ui-icon name="star"></ui-icon></div>
  <div class="group"><button class="down" type="button" aria-label="下载"><ui-icon name="download"></ui-icon></button><button type="button" aria-label="书库"><ui-icon name="library"></ui-icon></button><button type="button" aria-label="侧栏"><ui-icon name="sidebar"></ui-icon></button><button type="button" aria-label="扩展"><ui-icon name="sbadge"></ui-icon></button><button type="button" aria-label="截图"><ui-icon name="crop"></ui-icon></button><button type="button" aria-label="撤销"><ui-icon name="reply"></ui-icon></button><button type="button" aria-label="菜单"><ui-icon name="menu"></ui-icon></button></div>
</div>
<div class="marks"><slot name="mark"></slot><div class="m"><slot name="mobile"></slot></div></div>
<div class="meter"></div>`, root => {
  // The registered domain is drawn darker than the rest of the address.
  const input = root.querySelector('input');
  const pen = document.createElement('canvas').getContext('2d');
  pen.font = '14px "Open Sans", "Noto Sans", sans-serif';
  input.style.setProperty('--from', Math.round(pen.measureText('https://we7.').width) + 'px');
  input.style.setProperty('--to', Math.round(pen.measureText('https://we7.00393.cn').width) + 'px');
});

define('nav-item', `<style>
:host { display: block; }
a { display: flex; align-items: center; height: 50px; padding: 2px 15px 0; box-sizing: border-box; color: #cfd1d8; text-decoration: none; }
:host([active]) a { background: #313648; color: #fff; }
span { display: flex; width: 34px; }
ui-icon { --size: 18px; }
:host([icon=user]) ui-icon { margin-left: -2px; }
:host([icon=cog]) ui-icon, :host([icon=history]) ui-icon { margin-left: -1px; }
:host([icon=cogs]) ui-icon { --size: 20px; }
</style><a href="#"><span></span><slot></slot></a>`, (root, el) =>
  root.querySelector('span').innerHTML = `<ui-icon name="${el.getAttribute('icon')}"></ui-icon>`);

define('side-nav', `<style>
:host { display: block; flex: none; width: 110px; background: #3c4052; }
h1 { margin: 0; padding: 0 15px; height: 50px; font-size: 18px; line-height: 50px; font-weight: normal; color: #a5a8b3; white-space: nowrap; }
.extra { padding-top: 14px; border-top: 1px solid #313648; }
</style><h1></h1><nav><slot></slot><div class="extra"><slot name="extra"></slot></div></nav>`, (root, el) =>
  root.querySelector('h1').textContent = el.getAttribute('heading'));

define('top-bar', `<style>
:host { display: flex; flex: none; align-items: center; justify-content: flex-end; height: 50px; padding: 2px 46px 0 0; box-sizing: content-box; height: 48px; background: #fff; border-bottom: 1px solid #e7e7eb; }
a, button { display: flex; align-items: center; padding: 0; border: 0; background: none; font: inherit; color: #4d4d4d; text-decoration: none; }
button { margin: 0 50px; gap: 2px; }
a ui-icon { --size: 18px; }
.grey { color: #999; }
.grey ui-icon { --size: 16px; }
button ui-icon { --size: 15px; }
.caret { border: 4px solid transparent; border-top-color: currentColor; border-bottom: 0; }
</style><a href="#"><ui-icon name="reply"></ui-icon>返回系统</a><button type="button"><ui-icon name="person"></ui-icon>Croaker<span class="caret"></span></button><a class="grey" href="#" aria-label="消息"><ui-icon name="chatdot"></ui-icon></a>`);

define('crumb-sep', `<style>:host { display: inline; padding: 0 6px; }</style>-&gt;`);

define('crumb-alert', `<style>
:host { display: block; flex: none; padding: 11px 15px 0; border: 1px solid #faebcc; border-bottom-width: 2px; border-radius: 4px; background: #fdf7e3; color: #8a6d3b; box-shadow: 0 1px 2px rgba(0,0,0,.05); box-sizing: border-box; height: 43px; line-height: 20px; }
</style><slot></slot>`);

define('filter-panel', `<style>
:host { display: block; flex: none; border: 1px solid #bce8f1; border-radius: 4px; background: #fff; box-shadow: 0 1px 1px rgba(0,0,0,.05); }
h2 { margin: 0; padding: 10px 15px; border-bottom: 1px solid #bce8f1; border-radius: 3px 3px 0 0; background: #d9edf7; color: #31708f; font-size: 14px; line-height: 20px; font-weight: normal; }
form { padding: 15px 15px 45px; display: grid; grid-template-columns: 128px minmax(0, 1251fr) minmax(0, 271fr); column-gap: 14px; row-gap: 30px; align-items: center; }
label { text-align: right; color: #000; }
.pick { position: relative; display: flex; }
select, input { width: 100%; height: 34px; box-sizing: border-box; margin: 0; border: 1px solid #e7e7eb; border-radius: 0; background: #fff; padding: 0 16px; font: inherit; color: #444; appearance: none; outline: 0; }
.pick::after { content: ""; position: absolute; right: 0; top: 0; width: 36px; height: 34px; box-sizing: border-box; border: 1px solid #e7e7eb; background: #fff; pointer-events: none; }
.pick::before { content: ""; position: absolute; z-index: 1; right: 13px; top: 15px; border: 5px solid transparent; border-top-color: #999; border-bottom: 0; pointer-events: none; }
.go { padding-left: 16px; }
</style>
<h2>筛选</h2>
<form>
  <label for="unit">所在单位</label><div class="pick"><select id="unit"><option>不限</option></select></div><span></span>
  <label for="word">关键字</label><input id="word" type="text"><div class="go"><ui-button icon="search">搜索</ui-button></div>
</form>`);

define('data-panel', `<style>
:host { display: block; flex: none; border: 1px solid #ddd; border-radius: 4px; background: #fff; box-shadow: 0 1px 1px rgba(0,0,0,.05); overflow: hidden; }
.head { display: flex; align-items: center; padding: 10px 15px; background: #f5f5f5; border-bottom: 1px solid #ddd; }
.head slot { display: flex; gap: 4px; }
.head .gap5 { gap: 5px; }
.head .end { margin-left: auto; }
.body { padding: 15px; }
</style>
<div class="head"><slot name="filters"></slot></div>
<div class="head"><slot class="gap5" name="actions"></slot><div class="end"><slot name="page"></slot></div></div>
<div class="body"><slot></slot></div>`);

define('admin-table', `<style>
:host { display: block; }
table { width: 100%; table-layout: fixed; border-collapse: separate; border-spacing: 0; color: #333; }
th, td { padding: 8px; vertical-align: top; text-align: left; }
th { border-bottom: 2px solid #ddd; }
tr + tr td { border-top: 1px solid #ddd; }
.cjk { font-family: "Noto Sans CJK SC", sans-serif; }
.ops { display: flex; gap: 4px; }
td.b { height: 30px; padding-right: 0; line-height: 0; }
</style>
<table>
<colgroup><col style="width:100px"><col style="width:105px"><col style="width:100px"><col style="width:120px"><col style="width:150px"><col><col style="width:70px"><col style="width:145px"></colgroup>
<thead><tr><th>部门</th><th>账号</th><th>姓名</th><th>手机</th><th>权限</th><th>功能</th><th>状态</th><th>操作</th></tr></thead>
<tbody></tbody></table>`, root => {
  const rows = [
    ['所有部门', 'learning', '金彪', '18539311553', '添加|编辑|审核|删除', '站点管理|入口配置|系统配置|配置之幻灯|配置之九宫格|配置之底部菜单|权限管理|会员中心|学习中心|学习之栏目配置|学习之学习记录|考试中心|评论中心|留言中心|插件中心|插件之签到|插件之消息|插件之验证|首页数据|下载数据|搜索项之文章选择|搜索项之部门选择|搜索项之粉丝选择|搜索项之图标选择|搜索项之链接选择|搜索项之会员选择|搜索项之题库选择|搜索项之考题选择'],
    ['', 'wifiybb', '刘云', '18716188888', '添加|编辑|删除', '会员中心|学习中心|考试中心|评论中心|留言中心'],
    ['', 'wifiyba', '小测试', '18583155555', '添加|编辑|删除', '站点管理|入口配置|系统配置|权限管理|会员中心|学习中心|考试中心|评论中心|留言中心|插件中心'],
    ['市场部', 'wifiyb', '刘云', '18716188888', '添加|编辑|审核|删除', '会员中心|学习中心|考试中心|评论中心|留言中心'],
    ['市场部', 'ceshi', '刘云', '18716188888', '添加|编辑|删除', '会员中心|学习中心|考试中心|评论中心|留言中心|插件中心'],
    ['', 'bumenadmin', '刘云', '18716188888', '添加|编辑|删除', '站点管理|权限管理|会员中心|考试中心|评论中心|留言中心']
  ];
  root.querySelector('tbody').innerHTML = rows.map(r =>
    '<tr>' + r.map((c, i) => `<td${i > 3 ? ' class="cjk"' : ''}>${c}</td>`).join('') +
    '<td class="b"><ui-button small kind="success">显示</ui-button></td>' +
    '<td class="b"><div class="ops"><ui-button small kind="primary" icon="edit">配置</ui-button><ui-button small kind="danger" icon="trash">删除</ui-button></div></td></tr>').join('');
});

define('task-bar', `<style>
:host { display: flex; flex: none; height: 40px; background: linear-gradient(90deg, #22383f, #20333f 50%, #1a2640 90%); color: #fff; font-size: 12px; line-height: 16px; }
.apps { display: flex; gap: 1px; }
.apps button { position: relative; width: 48px; height: 40px; display: flex; align-items: center; justify-content: center; padding: 0; border: 0; background: none; --size: 24px; }
.apps button.run::after { content: ""; position: absolute; left: 4px; right: 4px; bottom: 0; height: 2px; background: #76b9ed; }
.apps button.on { background: #50646a; }
.apps button.on::after { left: 0; right: 0; }
.apps .start { --size: 16px; margin-right: 2px; }
.tray { margin-left: auto; display: flex; align-items: center; gap: 8px; }
.hidden { display: flex; gap: 8px; margin-right: 49px; }
.lang { margin-left: 2px; }
.clock { width: 60px; margin: 0 31px 0 24px; text-align: center; line-height: 17px; white-space: nowrap; }
.note { position: relative; display: flex; --size: 17px; width: 24px; margin-right: 8px; }
.note b { position: absolute; left: 8px; top: 8px; width: 15px; height: 13px; border-radius: 2px; background: #e00000; font: 10px/13px "Open Sans", sans-serif; text-align: center; }
</style>
<div class="apps">
<button class="start" aria-label="开始"><ui-icon name="windows"></ui-icon></button>
<button class="run" aria-label="文件"><ui-icon name="explorer"></ui-icon></button>
<button class="run on" aria-label="Firefox"><ui-icon name="foxbig"></ui-icon></button>
<button class="run" aria-label="FileZilla"><ui-icon name="filezilla"></ui-icon></button>
<button class="run" aria-label="Sublime"><ui-icon name="sublime"></ui-icon></button>
<button class="run" aria-label="微信"><ui-icon name="wechat2"></ui-icon></button>
<button class="run" aria-label="开发工具"><ui-icon name="devtool"></ui-icon></button>
</div>
<div class="tray">
<div class="hidden"><ui-icon name="bird"></ui-icon><ui-icon name="wps"></ui-icon><ui-icon name="dish"></ui-icon><ui-icon name="printer"></ui-icon><ui-icon name="qtool"></ui-icon><ui-icon name="wechat2"></ui-icon><ui-icon name="penguin"></ui-icon></div>
<ui-icon name="safe"></ui-icon><ui-icon name="nvidia"></ui-icon><ui-icon name="network"></ui-icon><ui-icon name="volume"></ui-icon><span class="lang">简体</span>
<div class="clock">10:58 周五<br>2021/9/10</div>
<div class="note"><ui-icon name="notes"></ui-icon><b>40</b></div>
</div>`);
</script>
</body>
</html>
